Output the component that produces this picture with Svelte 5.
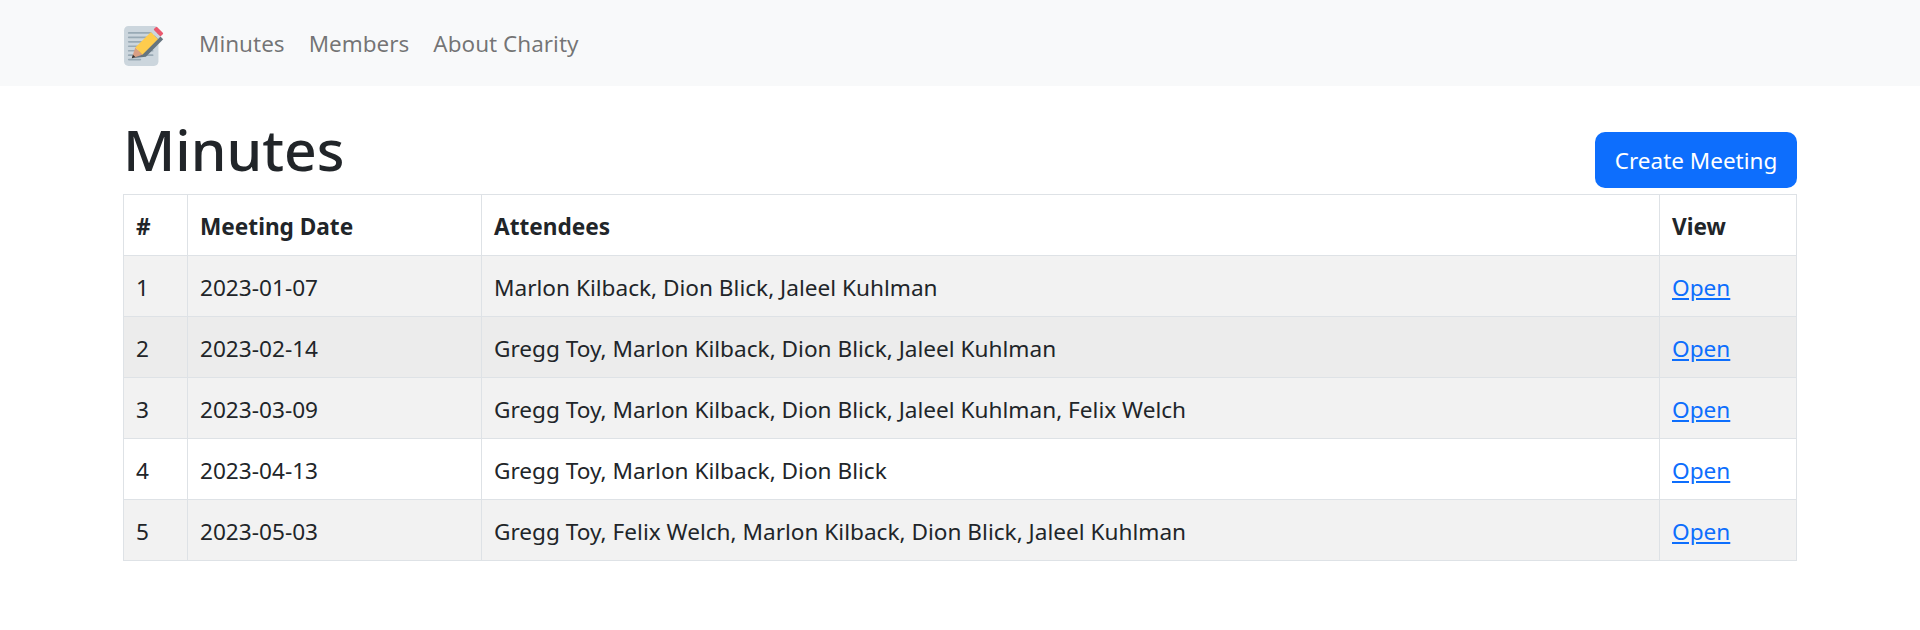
<script>
  const rows = [
    { id: 1, date: '2023-01-07', names: 'Marlon Kilback, Dion Blick, Jaleel Kuhlman' },
    { id: 2, date: '2023-02-14', names: 'Gregg Toy, Marlon Kilback, Dion Blick, Jaleel Kuhlman' },
    { id: 3, date: '2023-03-09', names: 'Gregg Toy, Marlon Kilback, Dion Blick, Jaleel Kuhlman, Felix Welch' },
    { id: 4, date: '2023-04-13', names: 'Gregg Toy, Marlon Kilback, Dion Blick' },
    { id: 5, date: '2023-05-03', names: 'Gregg Toy, Felix Welch, Marlon Kilback, Dion Blick, Jaleel Kuhlman' }
  ];
</script>

<nav class="navbar">
  <a class="brand" href="#top" aria-label="Home">
    <svg class="logo" viewBox="0 0 36 36" width="40" height="40">
      <path fill="#CCD6DD" d="M31 32c0 2.2-1.8 4-4 4H4c-2.2 0-4-1.800-4-4V4c0-2.200 1.800-4 4-4h23c2.200 0 4 1.800 4 4z" />
      <g fill="#99AAB5">
        <rect x="3.500" y="5.500" width="23" height="1.500" rx=".75" />
        <rect x="3.500" y="9.500" width="23" height="1.500" rx=".75" />
        <rect x="3.500" y="13.500" width="23" height="1.500" rx=".75" />
        <rect x="3.500" y="17.500" width="23" height="1.500" rx=".75" />
        <rect x="3.500" y="21.500" width="23" height="1.500" rx=".75" />
        <rect x="3.500" y="25.500" width="23" height="1.500" rx=".75" />
        <rect x="3.500" y="29.500" width="12" height="1.500" rx=".75" />
      </g>
      <g transform="translate(7 29) rotate(-45)">
        <path fill="#66757F" d="M0 0 L10 8 L32 8 L32 0 Z" />
        <path fill="#D99E82" d="M0 0 L9 -4.500 L9 4.500 Z" />
        <path fill="#292F33" d="M0 0 L3 -1.500 L3 1.500 Z" />
        <rect fill="#FFCC4D" x="9" y="-4.500" width="20" height="9" />
        <rect fill="#CCD6DD" x="29" y="-4.500" width="3" height="9" />
        <rect fill="#EA596E" x="32" y="-4.500" width="4" height="9" rx="1" />
      </g>
    </svg>
  </a>
  <a class="nav-link" href="#minutes">Minutes</a>
  <a class="nav-link" href="#members">Members</a>
  <a class="nav-link" href="#about">About Charity</a>
</nav>

<main class="content">
  <header class="title-row">
    <h1>Minutes</h1>
    <button class="btn" type="button">Create Meeting</button>
  </header>

  <table>
    <colgroup>
      <col class="col-id" />
      <col class="col-date" />
      <col />
      <col class="col-view" />
    </colgroup>
    <thead>
      <tr>
        <th>#</th>
        <th>Meeting Date</th>
        <th>Attendees</th>
        <th>View</th>
      </tr>
    </thead>
    <tbody>
      {#each rows as row}
        <tr class:plain={row.id === 4} class:hover={row.id === 2}>
          <td>{row.id}</td>
          <td>{row.date}</td>
          <td>{row.names}</td>
          <td><a href="#open">Open</a></td>
        </tr>
      {/each}
    </tbody>
  </table>
</main>

<style>
  :global(body) {
    margin: 0;
    background: #fff;
    color: #212529;
    font-family: "Noto Sans", "Open Sans", sans-serif;
    font-size: 22.500px;
    line-height: 1.5;
  }

  .navbar {
    display: flex;
    align-items: center;
    height: 86px;
    padding: 2px 123px 0;
    box-sizing: border-box;
    background: #f8f9fa;
  }

  .brand {
    display: flex;
    width: 76px;
    margin-top: 3px;
  }

  .logo {
    margin-left: 1px;
    overflow: visible;
  }

  .nav-link {
    padding-right: 24px;
    color: rgba(0, 0, 0, 0.55);
    text-decoration: none;
  }

  .content {
    padding: 0 123px;
  }

  .title-row {
    display: flex;
    justify-content: space-between;
    align-items: flex-end;
    height: 108px;
  }

  h1 {
    margin: 0 0 11px;
    font-size: 57px;
    font-weight: 500;
    line-height: 1.2;
  }

  .btn {
    margin-bottom: 6px;
    width: 202px;
    height: 56px;
    padding: 2px 0 0;
    border: 0;
    border-radius: 10px;
    background: #0d6efd;
    color: #fff;
    font: inherit;
  }

  table {
    width: 100%;
    table-layout: fixed;
    border-collapse: collapse;
    font-size: 22.620px;
  }

  .col-id { width: 64px; }
  .col-date { width: 294px; }
  .col-view { width: 137px; }

  th, td {
    height: 61px;
    padding: 3px 12px 0;
    box-sizing: border-box;
    border: 1px solid #dee2e6;
    text-align: left;
    white-space: nowrap;
  }

  th {
    font-weight: 700;
  }

  tbody tr {
    background: #f2f2f2;
  }

  tbody tr.hover {
    background: #ececec;
  }

  tbody tr.plain {
    background: #fff;
  }

  td a {
    color: #0d6efd;
  }
</style>
